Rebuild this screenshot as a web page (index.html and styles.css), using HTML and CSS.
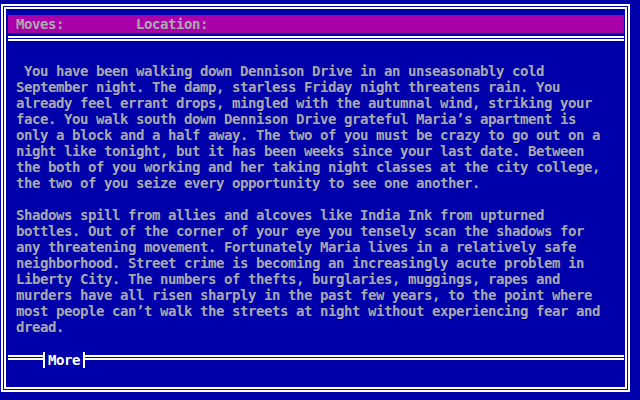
FILE: index.html
```html
<!DOCTYPE html>
<html>
<head>
<meta charset="utf-8">
<link rel="stylesheet" href="styles.css">
</head>
<body>
<div class="screen">
  <div class="panel">
    <div class="status">
      <span class="stat">Moves:</span><span class="stat">Location:</span>
    </div>
    <div class="rule"></div>
    <div class="story">
<p class="para"> You have been walking down Dennison Drive in an unseasonably cold
September night. The damp, starless Friday night threatens rain. You
already feel errant drops, mingled with the autumnal wind, striking your
face. You walk south down Dennison Drive grateful Maria’s apartment is
only a block and a half away. The two of you must be crazy to go out on a
night like tonight, but it has been weeks since your last date. Between
the both of you working and her taking night classes at the city college,
the two of you seize every opportunity to see one another.</p>
<p class="para">Shadows spill from allies and alcoves like India Ink from upturned
bottles. Out of the corner of your eye you tensely scan the shadows for
any threatening movement. Fortunately Maria lives in a relatively safe
neighborhood. Street crime is becoming an increasingly acute problem in
Liberty City. The numbers of thefts, burglaries, muggings, rapes and
murders have all risen sharply in the past few years, to the point where
most people can’t walk the streets at night without experiencing fear and
dread.</p>
    </div>
    <div class="more-row">
      <div class="rule rule-left"></div>
      <div class="bar"></div>
      <span class="more">More</span>
      <div class="bar"></div>
      <div class="rule rule-right"></div>
    </div>
  </div>
</div>
</body>
</html>
```
FILE: styles.css
```css
html, body {
  margin: 0;
  padding: 0;
}
body {
  width: 640px;
  height: 400px;
  overflow: hidden;
  background: #0000aa;
  color: #aaaaaa;
  font-family: "DejaVu Sans Mono", "Liberation Mono", monospace;
  font-size: 14px;
  font-weight: bold;
  letter-spacing: -0.43px;
  line-height: 16px;
}
.screen {
  box-sizing: border-box;
  margin: 4px 0 0 1px;
  width: 629px;
  height: 388px;
  border: 2px solid #ffffff;
  padding: 1px;
}
.panel {
  box-sizing: border-box;
  height: 100%;
  border: 2px solid #ffffff;
  padding: 6px 1px 0 2px;
  display: flex;
  flex-direction: column;
}
.status {
  height: 18px;
  line-height: 18px;
  background: #aa00aa;
  padding-left: 8px;
  display: flex;
}
.stat {
  width: 120px;
  white-space: pre;
}
.rule {
  box-sizing: content-box;
  height: 1px;
  border-top: 2px solid #ffffff;
  border-bottom: 2px solid #ffffff;
}
.panel > .rule {
  margin-top: 3px;
}
.story {
  margin-top: 22px;
  padding-left: 8px;
}
.para {
  margin: 0 0 16px 0;
  white-space: pre;
}
.para:last-child {
  margin-bottom: 0;
}
.more-row {
  margin-top: 17px;
  display: flex;
  align-items: flex-start;
  height: 16px;
}
.more-row .rule {
  margin-top: 3px;
}
.rule-left {
  width: 35px;
  flex: none;
}
.rule-right {
  flex: 1;
}
.bar {
  width: 2px;
  height: 16px;
  background: #ffffff;
  flex: none;
}
.more {
  padding: 0 3px;
  color: #ffffff;
  font-weight: bold;
  line-height: 16px;
}
```
